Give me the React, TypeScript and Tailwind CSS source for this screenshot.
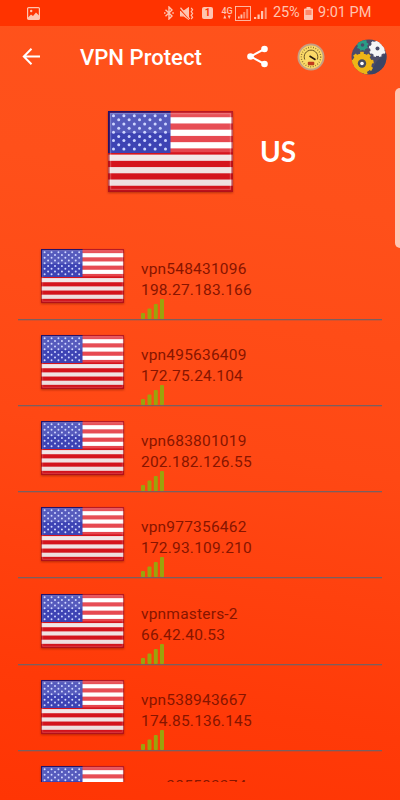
import { useId } from "react"

const servers = [
  { name: "vpn548431096", ip: "198.27.183.166" },
  { name: "vpn495636409", ip: "172.75.24.104" },
  { name: "vpn683801019", ip: "202.182.126.55" },
  { name: "vpn977356462", ip: "172.93.109.210" },
  { name: "vpnmasters-2", ip: "66.42.40.53" },
  { name: "vpn538943667", ip: "174.85.136.145" },
  { name: "vpn385583374", ip: "" },
]

function Flag({ className }: { className: string }) {
  const id = useId()
  const stars = []
  for (let row = 0; row < 9; row++) {
    const count = row % 2 === 0 ? 6 : 5
    for (let col = 0; col < count; col++) {
      stars.push({ x: 5.5 + col * 10.4 + (row % 2 ? 5.2 : 0), y: 4.7 + row * 4.15 })
    }
  }

  return (
    <svg viewBox="0 0 125 81" preserveAspectRatio="none" className={className}>
      <defs>
        <linearGradient id={`${id}shine`} x1="0" y1="0" x2="0" y2="1">
          <stop offset="0" stopColor="#fff" stopOpacity="0.08" />
          <stop offset="0.04" stopColor="#fff" stopOpacity="0.26" />
          <stop offset="0.5" stopColor="#fff" stopOpacity="0.2" />
          <stop offset="0.52" stopColor="#700" stopOpacity="0.09" />
          <stop offset="1" stopColor="#700" stopOpacity="0.14" />
        </linearGradient>
      </defs>
      <rect width="125" height="81" fill="#fff" />
      {[0, 1, 2, 3, 4, 5, 6].map((i) => (
        <rect key={i} y={i * 12.46} width="125" height="6.23" fill="#e01620" />
      ))}
      <rect width="125" height="81" fill={`url(#${id}shine)`} />
      <rect width="62.5" height="42" fill="#3d43b4" />
      <rect x="2" y="2" width="60.5" height="20" fill="#fff" opacity="0.13" />
      {stars.map((s, i) => (
        <circle key={i} cx={s.x} cy={s.y} r="1.5" fill="#cfd6ff" />
      ))}
      <rect x="2.6" y="2.6" width="119.8" height="75.8" fill="none" stroke="#fff" strokeWidth="1.2" opacity="0.22" />
      <rect x="0.8" y="0.8" width="123.4" height="79.4" fill="none" stroke="#a5101a" strokeWidth="1.6" opacity="0.7" />
      <path d="M0.8 42V0.8h61.7" fill="none" stroke="#23136b" strokeWidth="1.6" />
    </svg>
  )
}

function SignalBars() {
  return (
    <svg viewBox="0 0 24 20" className="-mt-[2px] h-5 w-6" fill="#9ba30c">
      <rect x="0" y="14" width="4" height="6" rx="1" />
      <rect x="6.5" y="9.5" width="4" height="10.5" rx="1" />
      <rect x="12.8" y="5" width="4" height="15" rx="1" />
      <rect x="19" y="0" width="4" height="20" rx="1" />
    </svg>
  )
}

function StatusBar() {
  return (
    <div className="flex h-[26px] shrink-0 items-center bg-[#ff3300] pl-[27px] text-[#ffc4b0]">
      <svg viewBox="0 0 13 13" className="h-[13px] w-[13px]">
        <rect x="0.6" y="0.6" width="11.8" height="11.8" rx="1" fill="none" stroke="currentColor" strokeWidth="1.2" />
        <path d="M1 10.5l3-3 2 1.5 3-3.5 3 3V12H1z" fill="currentColor" />
        <circle cx="4.2" cy="4" r="1.2" fill="currentColor" />
      </svg>
      <svg viewBox="0 0 10 14" className="ml-[124px] h-[14px] w-[10px]" fill="none" stroke="currentColor" strokeWidth="1.4">
        <path d="M1.5 3.8L8 10 5 13V1l3 3-6.5 6.2" />
        <path d="M0 7h1.5M8.3 7h1.5" />
      </svg>
      <svg viewBox="0 0 15 14" className="ml-[6px] h-[13px] w-[14px]" fill="none" stroke="currentColor" strokeWidth="1.3">
        <path d="M0.5 4.5h3.5l5-3.5v12l-5-3.5H0.5z" fill="currentColor" />
        <path d="M0 2.5l10 10.5" stroke="#ff3300" />
        <path d="M0.5 0.8l10 12" />
        <path d="M12 1l1.5 2-1.5 2 1.5 2-1.5 2 1.5 2-1.5 2" />
      </svg>
      <span className="ml-[8px] flex h-[12px] w-[11px] items-center justify-center rounded-[2px] bg-[#ffc4b0] font-['Roboto',sans-serif] text-[10px] leading-none font-bold text-[#ff3300]">
        1
      </span>
      <div className="ml-[8px] flex w-[12px] flex-col items-center">
        <span className="font-['Roboto',sans-serif] text-[9px] leading-[8px] font-medium">4G</span>
        <svg viewBox="0 0 8 4" className="h-[4px] w-[8px]" fill="currentColor">
          <path d="M0.3 3.5h3L1.8 0zM4.7 0.5h3L6.2 4z" />
        </svg>
      </div>
      <svg viewBox="0 0 16 15" className="ml-[2px] h-[15px] w-[16px]" fill="currentColor">
        <rect x="0.5" y="0.5" width="15" height="14" fill="none" stroke="currentColor" strokeWidth="0.9" />
        <path d="M3 10.5h1.7v2H3zM5.5 8.5h1.9v4H5.5z" />
        <path d="M8.2 6h2v6.5h-2zM11.2 3h2v9.5h-2z" opacity="0.6" />
      </svg>
      <svg viewBox="0 0 13 12" className="ml-[3px] h-[12px] w-[13px]" fill="currentColor">
        <path d="M0 10h2.2v2H0zM3.5 7.5h2.2V12H3.5zM7 4h2.2v8H7z" />
        <path d="M10.7 0.5h2V12h-2z" opacity="0.7" />
      </svg>
      <span className="ml-[6px] w-[27px] font-['Roboto',sans-serif] text-[14.5px] leading-none tracking-[-0.1px] whitespace-nowrap">25%</span>
      <svg viewBox="0 0 9 13" className="ml-[4px] h-[13px] w-[9px]" fill="currentColor">
        <path d="M2.5 0h4v1.5H8q1 0 1 1V12q0 1-1 1H1q-1 0-1-1V2.5q0-1 1-1h1.5z" />
        <path d="M1.5 3h6v5h-6z" fill="#ff3300" opacity="0.4" />
      </svg>
      <span className="ml-[5px] font-['Roboto',sans-serif] text-[14.5px] leading-none whitespace-nowrap">9:01 PM</span>
    </div>
  )
}

function Gauge() {
  return (
    <svg viewBox="0 0 28 28" className="h-7 w-7">
      <circle cx="14" cy="14" r="13.5" fill="#c6a083" />
      <circle cx="14" cy="14" r="11.6" fill="#fbd967" />
      <circle cx="14" cy="14" r="9.7" fill="none" stroke="#846a31" strokeWidth="1.4" strokeDasharray="0.8 1.7" />
      <path d="M7.7 16.5a6.8 6.8 0 1 1 12.6 0" fill="none" stroke="#59451d" strokeWidth="0.9" />
      <path d="M12.5 13l6 3.7" fill="none" stroke="#24180f" strokeWidth="1.6" />
      <rect x="10.8" y="18.8" width="6.5" height="3.4" rx="1" fill="#c0391d" />
    </svg>
  )
}

function Gear({ x, y, r, fill, teeth = 9 }: { x: number; y: number; r: number; fill: string; teeth?: number }) {
  return (
    <g transform={`translate(${x} ${y})`} fill={fill}>
      <circle r={r} />
      {Array.from({ length: teeth }, (_, i) => (
        <rect
          key={i}
          x={-r * 0.18}
          y={-r * 1.17}
          width={r * 0.36}
          height={r * 0.5}
          transform={`rotate(${(i * 360) / teeth})`}
        />
      ))}
    </g>
  )
}

function GearsIcon() {
  const id = useId()
  return (
    <svg viewBox="0 0 36 36" className="h-9 w-9">
      <clipPath id={id}>
        <circle cx="18" cy="18" r="17.5" />
      </clipPath>
      <g clipPath={`url(#${id})`}>
        <rect width="36" height="36" fill="#4b4c69" />
        <path d="M18 35l8-13 10-8v22z" fill="#3c4564" />
        <Gear x={11.5} y={6} r={5} fill="#2a9d86" />
        <circle cx="11.5" cy="6" r="1.8" fill="#4b4c69" />
        <Gear x={26.5} y={9.5} r={7.4} fill="#f5f5f7" />
        <circle cx="26.5" cy="9.5" r="2" fill="#4b4c69" />
        <Gear x={11} y={24.5} r={10} fill="#eeb516" />
        <circle cx="11" cy="24.5" r="4.2" fill="#464a60" />
        <circle cx="11" cy="24.5" r="1.8" fill="#fff" />
      </g>
    </svg>
  )
}

function Header() {
  return (
    <header className="flex h-[61px] shrink-0 items-center pl-[22px] text-white">
      <svg viewBox="0 0 18 17" className="h-[17px] w-[18px]" fill="none" stroke="currentColor" strokeWidth="2">
        <path d="M9.5 0.8L1.8 8.5l7.7 7.7M1.8 8.5H18" />
      </svg>
      <h1 className="ml-[40px] w-[122px] pt-px font-['Roboto',sans-serif] text-[22.1px] leading-none font-medium whitespace-nowrap">
        VPN Protect
      </h1>
      <svg viewBox="0 0 22 23" className="ml-[45px] h-[23px] w-[22px]" fill="currentColor">
        <path d="M17.5 4L3.5 11.5l14 7.5" fill="none" stroke="currentColor" strokeWidth="2" />
        <circle cx="17.5" cy="4" r="3.3" />
        <circle cx="3.5" cy="11.5" r="3.3" />
        <circle cx="17.5" cy="19" r="3.3" />
      </svg>
      <div className="ml-[28px]">
        <Gauge />
      </div>
      <div className="ml-[26px]">
        <GearsIcon />
      </div>
    </header>
  )
}

function ServerRow({ name, ip }: { name: string; ip: string }) {
  return (
    <li className="mx-[18px] flex h-[86px] border-b border-[#7b5f5f] pt-[15px] pl-[23px] shadow-[0_1px_0_rgba(123,95,95,0.3)] nth-5:h-[87px] nth-5:pt-4">
      <Flag className="h-[54px] w-[83px] shrink-0 drop-shadow-[0_1px_1px_rgba(110,20,0,0.5)]" />
      <div className="ml-[17px] pt-[10px] font-['Roboto',sans-serif] text-[15.5px] leading-[21px] tracking-[0.2px] text-[#871500]">
        <p>{name}</p>
        {ip && <p>{ip}</p>}
        <SignalBars />
      </div>
    </li>
  )
}

export default function App() {
  return (
    <div className="relative flex h-[800px] w-[400px] flex-col overflow-hidden bg-[linear-gradient(190deg,#ff531c_0%,#ff501a_25%,#ff4814_55%,#ff3a08_85%,#ff3504_100%)]">
      <StatusBar />
      <Header />
      <section className="flex h-[147px] shrink-0 pt-[24px] pl-[108px]">
        <Flag className="h-[81px] w-[125px] drop-shadow-[0_1px_1px_rgba(110,20,0,0.5)]" />
        <span className="mt-[23px] ml-[27px] font-['Lato',sans-serif] text-[28px] leading-[34px] font-bold text-white">US</span>
      </section>
      <ul className="h-[548px] shrink-0 overflow-hidden">
        {servers.map((server) => (
          <ServerRow key={server.name} name={server.name} ip={server.ip} />
        ))}
      </ul>
      <div className="absolute top-[88px] right-0 h-[160px] w-[5px] rounded-l-[5px] bg-[#ffc5b3]" />
    </div>
  )
}
